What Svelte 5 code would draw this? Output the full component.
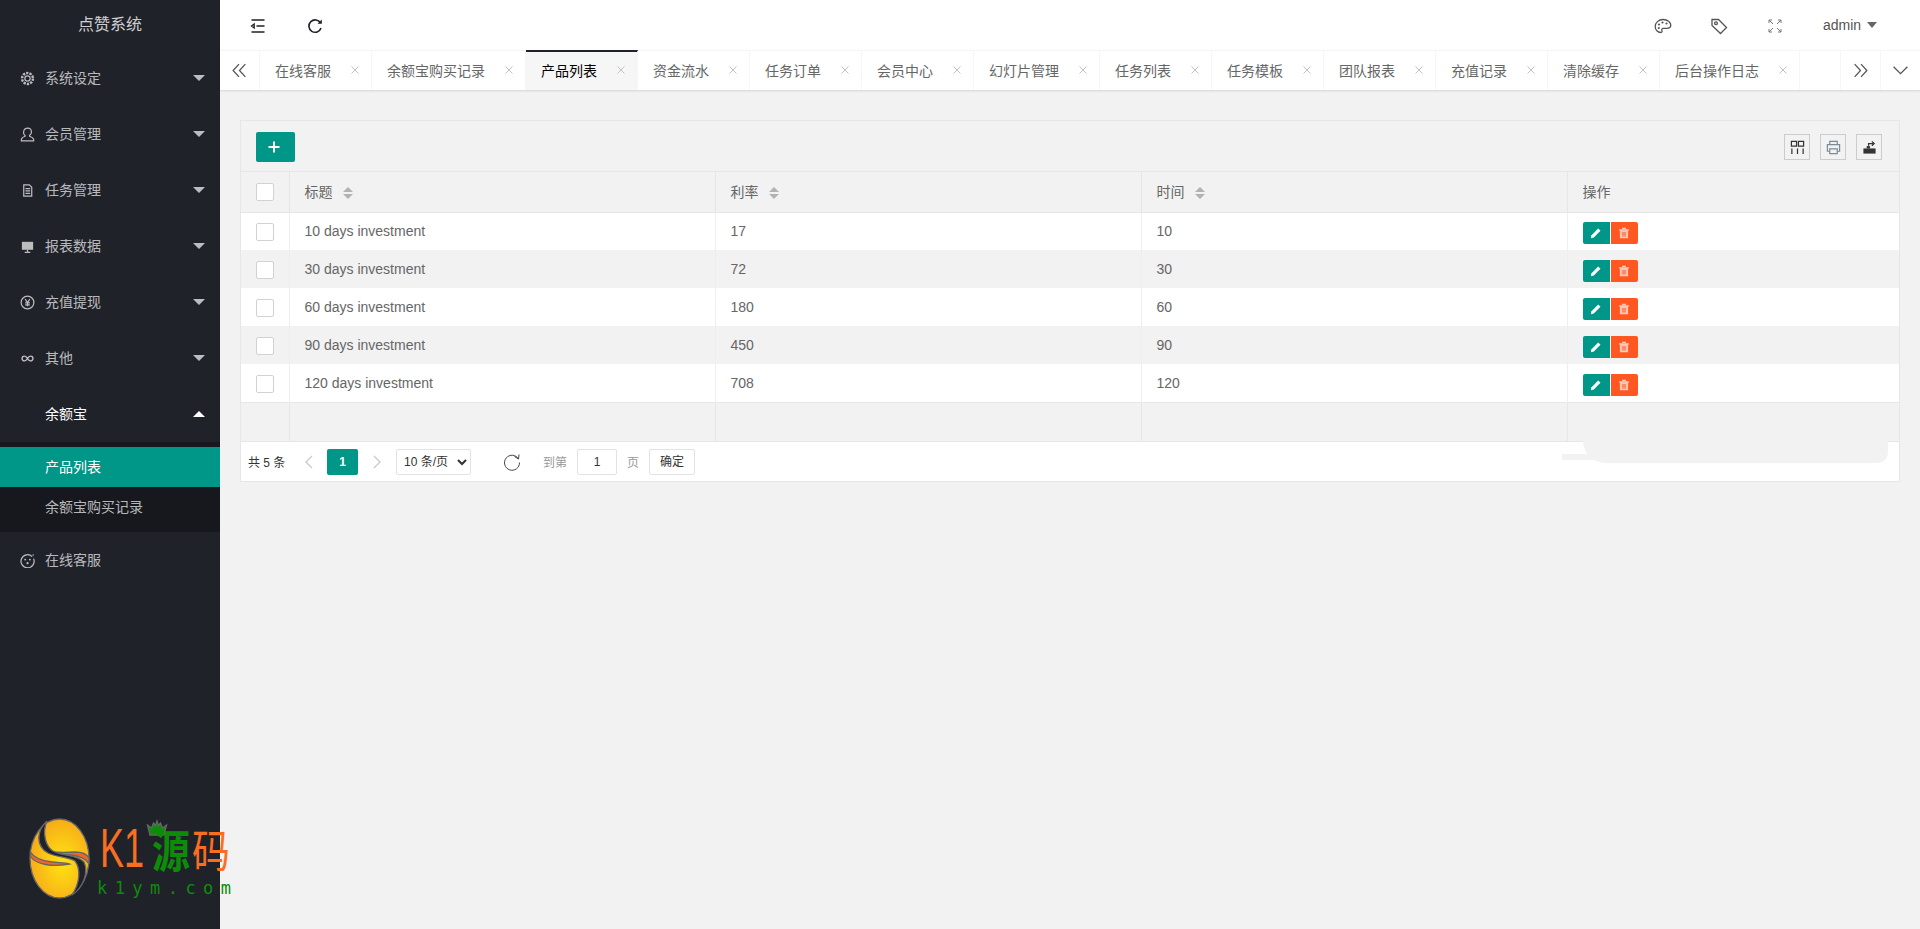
<script>
  const menu = [
    { label: '系统设定', icon: 'gear' },
    { label: '会员管理', icon: 'user' },
    { label: '任务管理', icon: 'file' },
    { label: '报表数据', icon: 'board' },
    { label: '充值提现', icon: 'rmb' },
    { label: '其他', icon: 'loop' }
  ];
  const tabs = ['在线客服', '余额宝购买记录', '产品列表', '资金流水', '任务订单', '会员中心', '幻灯片管理', '任务列表', '任务模板', '团队报表', '充值记录', '清除缓存', '后台操作日志'];
  const rows = [
    ['10 days investment', '17', '10'],
    ['30 days investment', '72', '30'],
    ['60 days investment', '180', '60'],
    ['90 days investment', '450', '90'],
    ['120 days investment', '708', '120']
  ];
</script>

<div class="app">
  <aside class="side">
    <div class="brand">点赞系统</div>
    <nav>
      {#each menu as m}
        <a class="item">
          <svg class="mi" viewBox="0 0 16 16">
            {#if m.icon === 'gear'}
              <circle cx="8" cy="8" r="2.800" /><circle cx="8" cy="8" r="5.800" stroke-dasharray="2.400 1.200" stroke-width="2.600" />
            {:else if m.icon === 'user'}
              <path d="M8.500 1.200c2.300 0 3.700 1.800 3.700 4 0 1.700-.8 3-2 3.700v1c1.800.6 3.800 1.500 4.300 3.100v1.800H1.500V13c.4-1.600 2-2.500 3.900-3.100V9C4.100 8.200 3.500 6.900 3.800 5.200 4.100 2.900 6 1.200 8.500 1.200z" />
            {:else if m.icon === 'file'}
              <path d="M4 2h6l2.500 2.500V14H4zM5.800 6h5M5.800 8.500h5M5.800 11h5" />
            {:else if m.icon === 'board'}
              <path class="fill" d="M2 3h12v8.500H2z" /><path d="M8 11.500V14M5 14.300h6" />
            {:else if m.icon === 'rmb'}
              <circle cx="8" cy="8" r="6.800" /><path d="M5.500 4.500 8 8l2.500-3.500M8 8v4M5.500 8.500h5M5.500 10.500h5" />
            {:else}
              <path stroke-width="1.500" d="M8 8C7 6.200 6 5.500 4.700 5.500a2.500 2.500 0 0 0 0 5C6 10.500 7 9.800 8 8c1-1.800 2-2.500 3.300-2.500a2.500 2.500 0 0 1 0 5C10 10.500 9 9.800 8 8z" />
            {/if}
          </svg>
          <span>{m.label}</span>
          <i class="tri"></i>
        </a>
      {/each}
      <a class="item open">
        <span class="noicon">余额宝</span>
        <i class="tri up"></i>
      </a>
      <div class="sub">
        <a class="subitem on">产品列表</a>
        <a class="subitem">余额宝购买记录</a>
      </div>
      <a class="item">
        <svg class="mi" viewBox="0 0 16 16">
          <path d="M13 3.800A7 7 0 1 0 14.500 6" /><circle class="fill" cx="5.500" cy="7" r="1" /><circle class="fill" cx="10.500" cy="7" r="1" /><circle class="fill" cx="8" cy="10.800" r="1.200" /><circle class="fill" cx="14" cy="2" r=".8" />
        </svg>
        <span>在线客服</span>
      </a>
    </nav>
  </aside>

  <main class="main">
    <header class="top">
      <div class="tl">
        <svg class="ti" viewBox="0 0 16 16"><path d="M1.500 2h13M6.500 8h8M1.500 14h13M1.500 8 4.200 6v4z" /></svg>
        <svg class="ti" viewBox="0 0 16 16"><path stroke-width="1.600" d="M13.500 5A6.200 6.200 0 1 0 14 10" /><path class="solid" d="M10.500 5.800h4.300V1.500z" /></svg>
      </div>
      <div class="tr">
        <svg class="ti2" viewBox="0 0 18 18"><path d="M9 2.500C4.500 2.500 1.200 5.800 1.200 9.500c0 3.500 2.700 6 5.500 6 1.500 0 1.600-1.200 1.200-2-.5-1 .1-2.200 1.500-2.200h3.300c2.300 0 4.100-1 4.100-3C16.800 5 13.500 2.500 9 2.500z" /><circle class="solid" cx="5" cy="7.500" r="1.100" /><circle class="solid" cx="8.500" cy="5.500" r="1.100" /><circle class="solid" cx="12.500" cy="6.500" r="1.100" /><circle class="solid" cx="4.800" cy="11" r="1.100" /></svg>
        <svg class="ti2" viewBox="0 0 18 18"><path d="M2 2.500h6.500l8 8-6 6-8.500-8z" /><circle cx="6" cy="6.300" r="1.400" /></svg>
        <svg class="ti2 thin" viewBox="0 0 18 18"><path d="M3 3l4 4M3 3h3M3 3v3M15 3l-4 4M15 3h-3M15 3v3M3 15l4-4M3 15h3M3 15v-3M15 15l-4-4M15 15h-3M15 15v-3" /></svg>
        <div class="admin">admin<i class="drop"></i></div>
      </div>
    </header>

    <div class="tabsbar">
      <div class="cell first">
        <svg class="chev" viewBox="0 0 16 16"><path d="M7.500 2 2 8l5.500 6M13.500 2 8 8l5.500 6" /></svg>
      </div>
      <div class="tabs">
        {#each tabs as t, i}
          <div class="tab" class:active={i === 2}>
            <span>{t}</span>
            <svg class="x" viewBox="0 0 8 8"><path d="M.5.500l7 7M7.500.500l-7 7" /></svg>
          </div>
        {/each}
      </div>
      <div class="cell">
        <svg class="chev" viewBox="0 0 16 16"><path d="M2.500 2 8 8l-5.500 6M8.500 2 14 8l-5.500 6" /></svg>
      </div>
      <div class="cell">
        <svg class="chev" viewBox="0 0 16 16"><path d="M1.500 4.500 8 11l6.500-6.500" /></svg>
      </div>
    </div>

    <section class="card">
      <div class="toolbar">
        <button class="add">
          <svg viewBox="0 0 12 12"><path d="M6 .5v11M.5 6h11" /></svg>
        </button>
        <div class="tools">
          <span class="tool">
            <svg viewBox="0 0 16 16"><path d="M1.500 1.500h5.500v5H1.500zM9 1.500h5.500v5H9zM2 9v6M8 9v6M14 9v6" /></svg>
          </span>
          <span class="tool">
            <svg class="print" viewBox="0 0 16 16"><path d="M4 5V1.500h8V5M4 12H1.500V5h13v7H12M4 9.500h8v5H4z" /></svg>
          </span>
          <span class="tool">
            <svg viewBox="0 0 16 16"><path class="solid" d="M1.500 9h13v5.500h-13z" /><path class="solid" d="M5 6.500h3.500V9H5z" /><path d="M7 6V3.800h5M10.500 1.500l2.500 2.300-2.500 2.300" /></svg>
          </span>
        </div>
      </div>

      <table>
        <colgroup>
          <col class="c0" /><col class="c1" /><col class="c1" /><col class="c1" /><col />
        </colgroup>
        <thead>
          <tr>
            <th class="chk"><span class="box"></span></th>
            <th>标题<i class="sort"></i></th>
            <th>利率<i class="sort"></i></th>
            <th>时间<i class="sort"></i></th>
            <th>操作</th>
          </tr>
        </thead>
        <tbody>
          {#each rows as r}
            <tr>
              <td class="chk"><span class="box"></span></td>
              <td>{r[0]}</td>
              <td>{r[1]}</td>
              <td>{r[2]}</td>
              <td class="ops">
                <span class="btn edit">
                  <svg viewBox="0 0 12 12"><path d="M.8 11.200l.7-3 6.700-6.700 2.300 2.300-6.700 6.700z" /></svg>
                </span><span class="btn del">
                  <svg viewBox="0 0 12 12"><path d="M1 2.300h10v1.200h-.9v7.800H1.900V3.500H1zM4 .7h4v1.300H4z" /><path class="hole" d="M3.800 4.800h4.400v4.800H3.800z" /></svg>
                </span>
              </td>
            </tr>
          {/each}
          <tr class="empty">
            <td></td><td></td><td></td><td></td><td></td>
          </tr>
        </tbody>
      </table>

      <div class="pager">
        <span class="count">共 5 条</span>
        <svg class="pg first-pg" viewBox="0 0 8 14"><path d="M7 1 1 7l6 6" /></svg>
        <span class="cur">1</span>
        <svg class="pg" viewBox="0 0 8 14"><path d="M1 1l6 6-6 6" /></svg>
        <select class="size"><option>10 条/页</option></select>
        <svg class="reload" viewBox="0 0 18 18"><path d="M15.500 6A7.500 7.500 0 1 0 16.500 9.500" /><path d="M11.500 3.500 15.500 6 16 1.500" /></svg>
        <span class="lbl">到第</span>
        <span class="jump">1</span>
        <span class="lbl">页</span>
        <span class="ok">确定</span>
        <div class="smudge"></div>
        <div class="smudge tail"></div>
      </div>
    </section>
  </main>

  <svg class="logo" viewBox="0 0 240 130" width="240" height="130">
    <defs>
      <radialGradient id="egg" cx="0.55" cy="0.55" r="0.65">
        <stop offset="0" stop-color="#ffe412" />
        <stop offset="1" stop-color="#f5a21a" />
      </radialGradient>
    </defs>
    <ellipse cx="59.500" cy="78.500" rx="29.500" ry="39.500" fill="url(#egg)" />
    <path fill="#f0652a" d="M30.500 72c4 7 13 9 22 10 8 .8 13 .5 17 2-8 1.500-16 2-24 .5-8-1.500-13-5-15-8z" />
    <path fill="#f0652a" d="M89 84c-3-6-10-8-18-9-8-1-14-1-19-3 7 .5 15 .5 23 0 7 0 12 2.500 14 6z" />
    <path fill="#20222a" d="M47 41C37 50 35 66 48 73c8 4 20 4 27 8 6 8 5 22-3 34 11-7 17-23 12-33-6-7-21-6-29-10-10-4-13-20-8-31z" />
    <text class="k1" transform="translate(100 87) scale(1 1.550)">K1</text>
    <path fill="#0d8c0a" d="M150 55l-2.500-10 4 3 2-5 2 2.500 1.500-4.500 1.500 4.500 2-2.500 2 5 4-3-2.500 10z" />
    <text class="cn g" transform="translate(152 88) scale(1 1.200)">源</text>
    <text class="cn o" transform="translate(192 88) scale(1 1.200)">码</text>
    <text class="url" x="97" y="114" textLength="134">k1ym.com</text>
  </svg>
</div>

<style>
  :global(body) {
    margin: 0;
    background: #f2f2f2;
    overflow: hidden;
    font-family: "Liberation Sans", "Noto Sans CJK SC", sans-serif;
    font-size: 14px;
    color: #666;
  }
  .app {
    display: flex;
    height: 929px;
    position: relative;
    overflow: hidden;
  }
  svg { fill: none; stroke: currentColor; stroke-width: 1.300; display: block; }
  svg .fill { fill: currentColor; stroke: none; }
  svg .solid { fill: currentColor; stroke: none; }

  /* sidebar */
  .side {
    width: 220px;
    flex: none;
    background: #20222a;
    color: rgba(255, 255, 255, 0.7);
  }
  .brand {
    height: 50px;
    line-height: 50px;
    text-align: center;
    font-size: 16px;
    color: rgba(255, 255, 255, 0.8);
  }
  .item {
    height: 56px;
    display: flex;
    align-items: center;
    padding: 0 15px 0 20px;
  }
  .item span { margin-bottom: 2px; }
  .mi { width: 15px; height: 15px; margin-right: 10px; }
  .noicon { margin-left: 25px; }
  .open { color: #fff; }
  .tri {
    margin-left: auto;
    width: 0;
    height: 0;
    border: 6px solid transparent;
    border-top-color: rgba(255, 255, 255, 0.7);
    border-bottom-width: 0;
  }
  .tri.up {
    border-top-width: 0;
    border-bottom: 6px solid #fff;
    border-top-color: transparent;
  }
  .sub {
    background: #17181e;
    padding: 5px 0;
  }
  .subitem {
    display: block;
    height: 40px;
    line-height: 40px;
    padding-left: 45px;
  }
  .subitem.on { background: #009688; color: #fff; }

  /* top */
  .main { flex: 1; min-width: 0; }
  .top {
    height: 50px;
    background: #fff;
    display: flex;
    justify-content: space-between;
    align-items: center;
    color: #333;
    box-sizing: border-box;
  }
  .tl { display: flex; gap: 41px; padding-left: 30px; margin-top: 2px; }
  .ti { width: 16px; height: 16px; color: #20222a; }
  .tr { display: flex; align-items: center; gap: 38px; margin-top: 2px; }
  .ti2 { width: 18px; height: 18px; color: #555; }
  .ti2.thin { stroke-width: 1; color: #777; }
  .admin {
    font-size: 14px;
    color: #555;
    width: 97px;
    margin-left: 1px;
    display: flex;
    align-items: center;
    margin-top: -3px;
  }
  .drop {
    border: 5.500px solid transparent;
    border-top: 6px solid #666;
    border-bottom: 0;
    margin-left: 6px;
  }

  /* tabs */
  .tabsbar {
    height: 40px;
    background: #fff;
    display: flex;
    box-sizing: border-box;
    border-top: 1px solid #f6f6f6;
    box-shadow: 0 1px 2px rgba(0, 0, 0, 0.12);
    position: relative;
  }
  .cell {
    width: 40px;
    flex: none;
    display: flex;
    align-items: center;
    justify-content: center;
    border-left: 1px solid #f6f6f6;
    box-sizing: border-box;
    color: #555;
  }
  .cell.first { border-left: 0; border-right: 1px solid #f6f6f6; }
  .chev { width: 17px; height: 17px; stroke-width: 1.200; }
  .tabs { display: flex; width: 1580px; flex: none; }
  .tab {
    display: flex;
    align-items: center;
    gap: 20px;
    padding: 0 12px 0 15px;
    box-sizing: border-box;
    border-right: 1px solid #f6f6f6;
    color: #666;
    white-space: nowrap;
    margin-top: -1px;
    height: 40px;
  }
  .tab.active {
    background: #f6f6f6;
    color: #000;
    border-top: 2px solid #20222a;
    padding-bottom: 2px;
  }
  .x { width: 8px; height: 8px; color: #c2c2c2; stroke-width: 1; }

  /* card */
  .card {
    margin: 30px 20px 0;
    background: #f2f2f2;
    border: 1px solid #e6e6e6;
    box-sizing: border-box;
    height: 362px;
  }
  .toolbar {
    height: 51px;
    padding: 11px 17px 0 15px;
    box-sizing: border-box;
    display: flex;
    justify-content: space-between;
    border-bottom: 1px solid #e6e6e6;
  }
  .add {
    width: 39px;
    height: 30px;
    padding: 0 3px 0 0;
    border: 0;
    border-radius: 2px;
    background: #009688;
    color: #fff;
    display: flex;
    align-items: center;
    justify-content: center;
  }
  .add svg { width: 12px; height: 12px; stroke-width: 2; }
  .tools { display: flex; gap: 10px; margin-top: 2px; }
  .tool {
    width: 26px;
    height: 26px;
    box-sizing: border-box;
    border: 1px solid #ccc;
    display: flex;
    align-items: center;
    justify-content: center;
    color: #333;
  }
  .tool svg { width: 15px; height: 15px; }
  .tool .print { color: #7d8a97; }

  table {
    width: 100%;
    table-layout: fixed;
    border-collapse: collapse;
  }
  .c0 { width: 48px; }
  .c1 { width: 426px; }
  th, td {
    padding: 0 15px;
    border-right: 1px solid #e6e6e6;
    text-align: left;
    font-weight: 400;
    color: #666;
    box-sizing: border-box;
    white-space: nowrap;
  }
  th { padding-bottom: 2px; }
  th:last-child, td:last-child { border-right: 0; }
  thead tr { height: 40px; border-bottom: 1px solid #e6e6e6; }
  tbody tr { height: 38px; background: #fff; }
  tbody tr:nth-child(even) { background: #f2f2f2; }
  tbody td { border-right-color: #eee; }
  tr.empty { height: 39px; background: #f2f2f2 !important; border-top: 1px solid #e6e6e6; }
  tr.empty td { border-right-color: #e6e6e6; }
  .chk { padding: 0 0 0 15px; }
  tbody .chk { padding-top: 2px; }
  .box {
    display: block;
    width: 18px;
    height: 18px;
    box-sizing: border-box;
    border: 1px solid #d2d2d2;
    border-radius: 2px;
    background: #fff;
  }
  .sort {
    display: inline-block;
    vertical-align: middle;
    margin-left: 10px;
    width: 0;
    height: 12px;
    position: relative;
    border-left: 5px solid transparent;
    border-right: 5px solid transparent;
  }
  .sort::before, .sort::after {
    content: "";
    position: absolute;
    left: -5px;
    border-left: 5px solid transparent;
    border-right: 5px solid transparent;
  }
  .sort::before { top: 0; border-bottom: 5px solid #b2b2b2; }
  .sort::after { bottom: 0; border-top: 5px solid #b2b2b2; }
  .ops { padding-top: 4px; }
  .btn {
    display: inline-flex;
    align-items: center;
    justify-content: center;
    width: 27px;
    height: 22px;
    vertical-align: middle;
    color: #fff;
  }
  .btn svg { width: 12px; height: 12px; stroke: none; fill: currentColor; }
  .edit { background: #009688; border-radius: 2px 0 0 2px; margin-right: 1px; }
  .del { background: #ff5722; border-radius: 0 2px 2px 0; color: #ffc9b8; }
  .btn .hole { fill: #ff8a66; }

  /* pager */
  .pager {
    height: 40px;
    background: #fff;
    border-top: 1px solid #e6e6e6;
    display: flex;
    align-items: center;
    padding-left: 7px;
    box-sizing: border-box;
    font-size: 12px;
    position: relative;
  }
  .count { color: #333; width: 37px; flex: none; white-space: nowrap; }
  .pg { width: 8px; height: 14px; color: #c9c9c9; margin: 0 15px; }
  .pg.first-pg { margin: 0 14px 0 20px; }
  .cur {
    width: 31px;
    height: 26px;
    line-height: 26px;
    text-align: center;
    color: #fff;
    font-weight: 700;
    background: #009688;
    border-radius: 2px;
  }
  .size {
    width: 75px;
    height: 26px;
    box-sizing: border-box;
    border: 1px solid #e2e2e2;
    border-radius: 2px;
    background: #fff;
    font: 12px "Liberation Sans", "Noto Sans CJK SC", sans-serif;
    color: #333;
    padding: 0 0 0 3px;
  }
  .reload { width: 18px; height: 18px; color: #444; margin: 0 22px 0 32px; stroke-width: 1; }
  .lbl { color: #999; }
  .jump, .ok {
    height: 26px;
    line-height: 24px;
    box-sizing: border-box;
    border: 1px solid #e2e2e2;
    border-radius: 2px;
    text-align: center;
  }
  .jump { width: 40px; margin: 0 10px; color: #333; }
  .ok { width: 46px; margin-left: 10px; color: #333; }
  .smudge {
    position: absolute;
    left: 1342px;
    top: -1px;
    width: 305px;
    height: 22px;
    background: #f2f2f2;
    border-radius: 0 0 14px 30px;
  }
  .smudge.tail {
    left: 1321px;
    top: 12px;
    width: 35px;
    height: 6px;
    border-radius: 0;
  }

  /* logo overlay */
  .logo {
    position: absolute;
    left: 0;
    top: 780px;
    overflow: visible;
  }
  .logo text { stroke: none; }
  .k1 { font: 400 36px "Liberation Sans", sans-serif; fill: #f96f22; }
  .cn { font: 700 38px "Noto Sans CJK SC", sans-serif; }
  .g { fill: #0d8c0a; }
  .o { fill: #f96f22; font-weight: 400; }
  .url { font: 400 17px "DejaVu Sans Mono", monospace; fill: #0d8c0a; }
</style>
